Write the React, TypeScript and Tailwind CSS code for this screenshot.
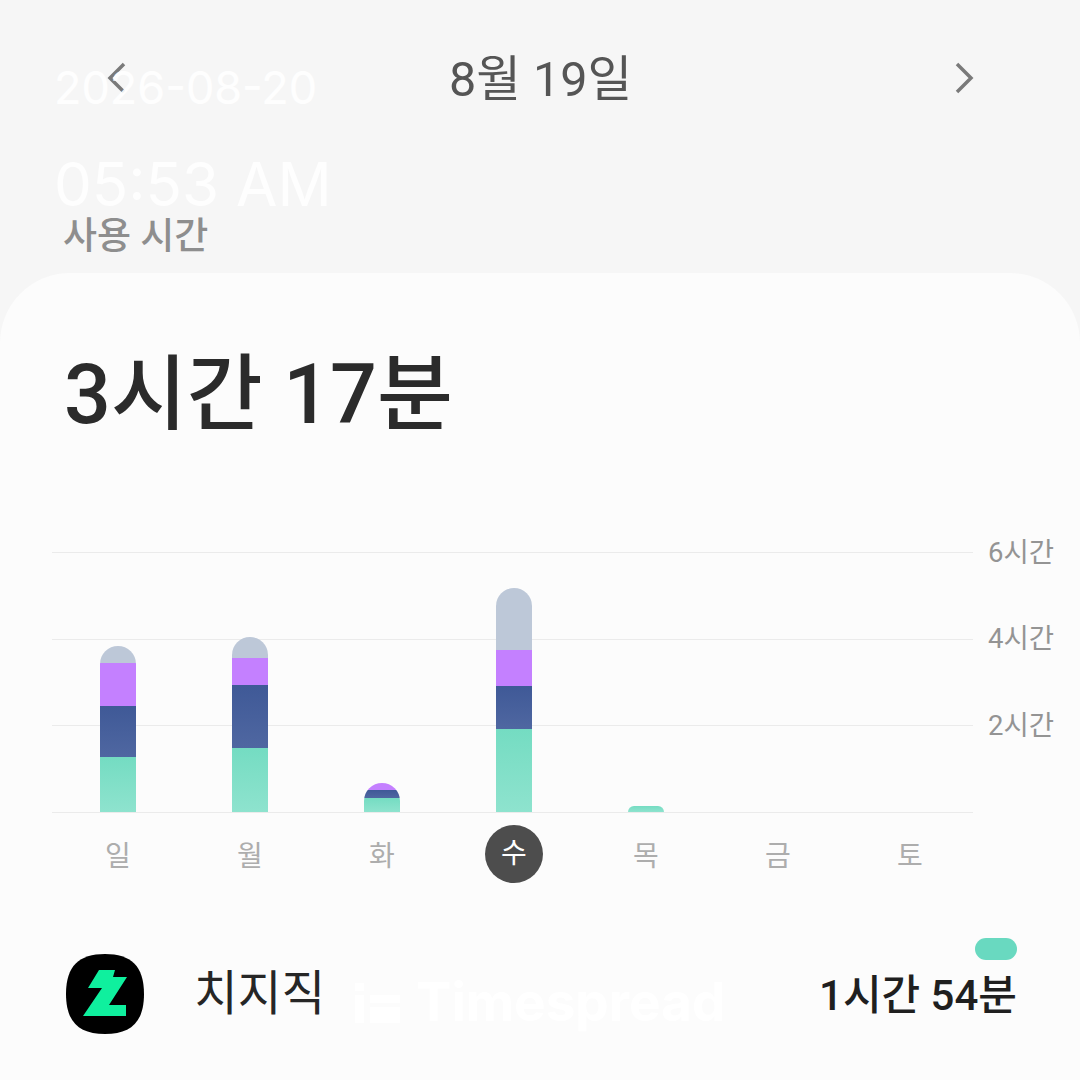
const font = "font-['Roboto','Noto_Sans_CJK_KR',sans-serif]";

const days = [
  { label: "일", gray: 17, purple: 43, blue: 51, green: 55 },
  { label: "월", gray: 21, purple: 27, blue: 63, green: 64 },
  { label: "화", gray: 0, purple: 7, blue: 8, green: 14 },
  { label: "수", gray: 62, purple: 36, blue: 43, green: 83, active: true },
  { label: "목", gray: 0, purple: 0, blue: 0, green: 6 },
  { label: "금", gray: 0, purple: 0, blue: 0, green: 0 },
  { label: "토", gray: 0, purple: 0, blue: 0, green: 0 },
];

const axis = ["6시간", "4시간", "2시간", ""];

function Chevron({ dir }: { dir: "left" | "right" }) {
  return (
    <svg width="20" height="32" viewBox="0 0 20 32" fill="none" stroke="#7a7a7a" strokeWidth="3.5">
      <path d={dir === "left" ? "M17 2 L3 16 L17 30" : "M3 2 L17 16 L3 30"} />
    </svg>
  );
}

function Bar({ gray, purple, blue, green }: { gray: number; purple: number; blue: number; green: number }) {
  const total = gray + purple + blue + green;
  if (!total) return null;
  return (
    <div className="flex w-9 flex-col overflow-hidden rounded-t-[18px]">
      {gray > 0 && <div className="bg-[#bdc8d8]" style={{ height: gray }} />}
      {purple > 0 && <div className="bg-[#c480ff]" style={{ height: purple }} />}
      {blue > 0 && <div className="bg-gradient-to-b from-[#3f5997] to-[#4f67a1]" style={{ height: blue }} />}
      <div className="bg-gradient-to-b from-[#74dcc2] to-[#8ee3ce]" style={{ height: green }} />
    </div>
  );
}

export default function App() {
  return (
    <div className={`relative flex h-[1080px] w-[1080px] flex-col overflow-hidden bg-[#f6f6f6] ${font}`}>
      {/* header */}
      <header className="flex h-[273px] shrink-0 flex-col px-[63px]">
        <div className="mt-[47px] flex h-[62px] items-center justify-between pl-[44px] pr-[43px]">
          <Chevron dir="left" />
          <span className="pt-[4px] text-[48.5px] leading-none text-[#555555]">8월 19일</span>
          <Chevron dir="right" />
        </div>
        <p className="mt-[106px] text-[37px] font-medium leading-[44px] text-[#8e8e8e]">사용 시간</p>
      </header>

      {/* card */}
      <main className="flex flex-1 flex-col rounded-t-[70px] bg-[#fcfcfc]">
        <h1 className="mt-[80px] pl-[64px] text-[82.5px] font-medium leading-[84px] text-[#2b2b2b]">3시간 17분</h1>

        <div className="relative ml-[52px] mt-[115px] h-[261px] w-[1010px]">
          <div className="flex h-full flex-col justify-between">
            {axis.map((t, i) => (
              <div key={i} className="flex h-px items-center gap-[15px]">
                <div className="h-px w-[921px] bg-[#ebebeb]" />
                <span className="text-[27.5px] leading-none text-[#949494]">{t}</span>
              </div>
            ))}
          </div>
          <div className="absolute bottom-px left-0 grid w-[924px] grid-cols-7 items-end">
            {days.map((d) => (
              <div key={d.label} className="flex justify-center">
                <Bar gray={d.gray} purple={d.purple} blue={d.blue} green={d.green} />
              </div>
            ))}
          </div>
        </div>

        <div className="ml-[52px] mt-[12px] grid w-[924px] grid-cols-7">
          {days.map((d) => (
            <div key={d.label} className="flex justify-center">
              {d.active ? (
                <span className="flex h-[58px] w-[58px] items-center justify-center rounded-full bg-[#4d4d4d] text-[28px] text-white">{d.label}</span>
              ) : (
                <span className="flex h-[58px] items-center pt-[6px] text-[28px] text-[#adadad]">{d.label}</span>
              )}
            </div>
          ))}
        </div>

        <div className="mt-[71px] flex items-start pl-[65px] pr-[63px]">
          <svg width="80" height="80" viewBox="0 0 80 80">
            <path d="M40 0 C66 0 79 12 79 40 C79 68 66 80 40 80 C14 80 1 68 1 40 C1 12 14 0 40 0 Z" fill="#000000" />
            <polygon points="34,16 50,16 48,23 62,23 44,51 61,51 61,62 18,62 37,34 23,34" fill="#0ff09e" />
          </svg>
          <span className="ml-[49px] self-center pt-[2px] text-[47.5px] leading-none text-[#262626]">치지직</span>
          <div className="ml-auto -mt-[16px] flex flex-col items-end gap-[15px]">
            <div className="h-[22px] w-[42px] rounded-full bg-[#69d9c0]" />
            <span className="text-[42px] font-medium leading-[42px] text-[#1f1f1f]">1시간 54분</span>
          </div>
        </div>
      </main>

      {/* watermark stamped over the screenshot */}
      <div className="pointer-events-none absolute left-[54px] top-[60px] font-['Inter',sans-serif] text-[45px] leading-[56px] text-white/90">2026-08-20</div>
      <div className="pointer-events-none absolute left-[54px] top-[146px] font-['Inter',sans-serif] text-[60px] leading-[76px] text-white/90">05:53 AM</div>
      <div className="pointer-events-none absolute left-[355px] top-[973px] flex items-center gap-[16px] font-['Inter',sans-serif] text-[53px] font-bold leading-[58px] text-white">
        <svg width="45" height="42" viewBox="0 0 45 42" fill="#ffffff">
          <rect x="0" y="14" width="9" height="28" />
          <rect x="0" y="2" width="9" height="8" />
          <rect x="15" y="14" width="30" height="8" />
          <rect x="15" y="26" width="30" height="16" />
        </svg>
        <span>Timespread</span>
      </div>
    </div>
  );
}
